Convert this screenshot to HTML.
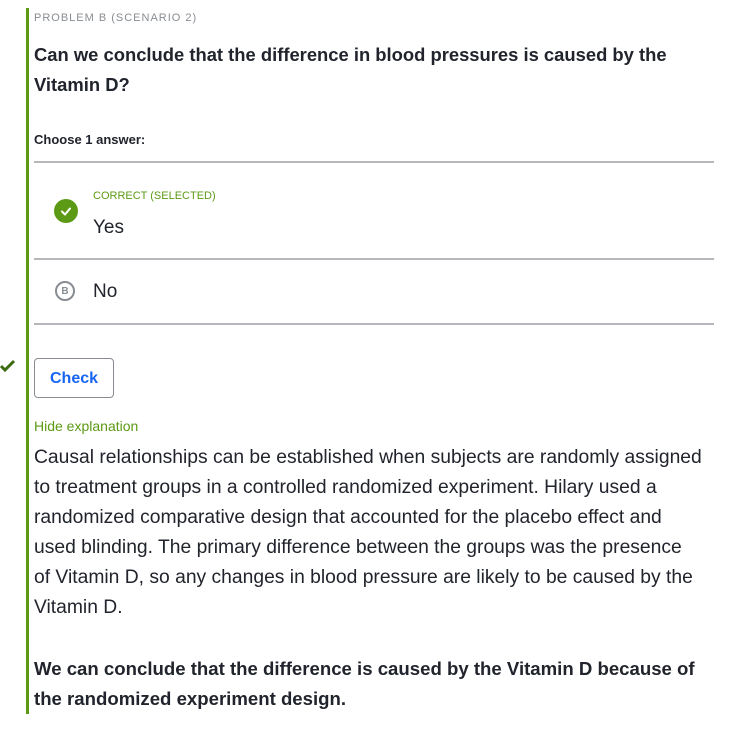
<!DOCTYPE html>
<html><head><style>
body{margin:0;background:#fff;width:740px;height:732px;position:relative;font-family:"Liberation Sans",sans-serif;color:#21242c;overflow:hidden}
.a{position:absolute;white-space:nowrap}
.bar{position:absolute;left:26px;top:8px;width:3px;height:706px;background:#5c9a15}
.hr{position:absolute;left:34px;width:680px;height:2px;background:#b5b7bb}
p{margin:0}
</style></head><body>
<div class="bar"></div>
<div class="a" style="left:34px;top:12px;font-size:11px;color:#888d93;letter-spacing:1px">PROBLEM B (SCENARIO 2)</div>
<div class="a" style="left:34px;top:40px;font-size:18.4px;font-weight:bold;line-height:30px">Can we conclude that the difference in blood pressures is caused by the<br>Vitamin D?</div>
<div class="a" style="left:34px;top:132px;font-size:13px;font-weight:bold">Choose 1 answer:</div>
<div class="hr" style="top:161px"></div>
<div class="a" style="left:93px;top:190px;font-size:11px;color:#5c9a15">CORRECT (SELECTED)</div>
<div class="a" style="left:54px;top:199px;width:24px;height:24px;border-radius:50%;background:#5c9a15"></div>
<svg class="a" style="left:54px;top:199px" width="24" height="24"><path d="M8 12.5l3 3 5-6" stroke="#fff" stroke-width="2" fill="none" stroke-linecap="round" stroke-linejoin="round"/></svg>
<div class="a" style="left:93px;top:217px;font-size:19px">Yes</div>
<div class="hr" style="top:258px"></div>
<div class="a" style="left:55px;top:281px;width:20px;height:20px;border:2px solid #888d93;border-radius:50%;box-sizing:border-box;font-size:10px;font-weight:bold;color:#888d93;text-align:center;line-height:17px">B</div>
<div class="a" style="left:93px;top:281px;font-size:19px">No</div>
<div class="hr" style="top:323px"></div>
<svg class="a" style="left:0;top:359px" width="16" height="14"><path d="M1 7l4 4 9-9" stroke="#3d6b10" stroke-width="3" fill="none"/></svg>
<div class="a" style="left:34px;top:358px;width:80px;height:40px;border:1px solid #888d93;border-radius:4px;box-sizing:border-box;color:#1865f2;font-size:16px;font-weight:bold;text-align:center;line-height:40px">Check</div>
<div class="a" style="left:34px;top:418px;font-size:14px;color:#5c9a15">Hide explanation</div>
<div class="a" style="left:34px;top:443px;font-size:19.3px;line-height:30px">Causal relationships can be established when subjects are randomly assigned<br>to treatment groups in a controlled randomized experiment. Hilary used a<br>randomized comparative design that accounted for the placebo effect and<br>used blinding. The primary difference between the groups was the presence<br>of Vitamin D, so any changes in blood pressure are likely to be caused by the<br>Vitamin D.</div>
<div class="a" style="left:34px;top:654px;font-size:18.6px;font-weight:bold;line-height:30px">We can conclude that the difference is caused by the Vitamin D because of<br>the randomized experiment design.</div>
</body></html>
